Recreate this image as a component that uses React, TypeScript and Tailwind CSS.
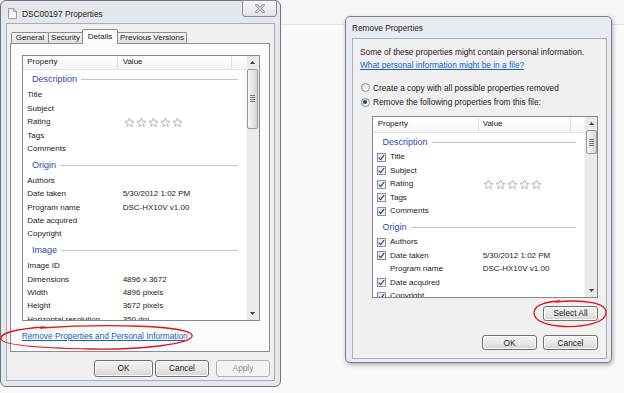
import React from "react";

const F = "font-['Liberation_Sans',Arial,sans-serif]";

function DocIcon() {
  return (
    <svg width="9" height="11" viewBox="0 0 9 11">
      <path d="M0.5 0.5 H5.5 L8.5 3.5 V10.5 H0.5 Z" fill="#fff" stroke="#9b9b9b" />
      <path d="M5.5 0.5 V3.5 H8.5" fill="none" stroke="#9b9b9b" />
    </svg>
  );
}

function CloseBtn() {
  return (
    <div className="mr-[3px] -mt-px w-[35px] h-[17px] rounded-b-[3px] border border-[#8a8e94] bg-gradient-to-b from-[#f7f8fa] to-[#dfe3e8] flex items-center justify-center">
      <svg width="10" height="9" viewBox="0 0 10 9">
        <path d="M1.5 1 L8.5 8 M8.5 1 L1.5 8" stroke="#8d9399" strokeWidth="2.6" strokeLinecap="square" />
        <path d="M1.5 1 L8.5 8 M8.5 1 L1.5 8" stroke="#f4f5f7" strokeWidth="1" strokeLinecap="square" />
      </svg>
    </div>
  );
}

function Tab({ children, w, active }: { children: React.ReactNode; w: string; active?: boolean }) {
  return (
    <div
      className={`${w} ${
        active
          ? "relative z-10 -mb-px h-[15.5px] bg-[#fcfcfc] border border-b-0 border-[#898c95]"
          : "h-[11.5px] bg-gradient-to-b from-[#f4f4f4] to-[#e1e1e1] border border-b-0 border-[#898c95]"
      } rounded-t-[2px] flex items-center justify-center text-[8px] leading-none`}
    >
      {children}
    </div>
  );
}

function Star() {
  return (
    <svg width="11" height="11" viewBox="0 0 24 24">
      <path
        d="M12 2.5l2.9 6.3 6.9.7-5.2 4.6 1.5 6.8L12 17.4l-6.1 3.5 1.5-6.8-5.2-4.6 6.9-.7z"
        fill="#fff"
        stroke="#adadad"
        strokeWidth="2"
        strokeLinejoin="round"
      />
    </svg>
  );
}

function Stars() {
  return (
    <div className="flex gap-[1px]">
      <Star />
      <Star />
      <Star />
      <Star />
      <Star />
    </div>
  );
}

function Scrollbar({ up, thumb }: { up: string; thumb: string }) {
  return (
    <div className="w-[13px] h-full shrink-0 bg-[#eaeaea] border-l border-[#f4f4f4] flex flex-col items-center">
      <div className={`${up} w-full flex items-center justify-center`}>
        <svg width="5" height="3" viewBox="0 0 5 3">
          <path d="M0 3 L2.5 0 L5 3 Z" fill="#404040" />
        </svg>
      </div>
      <div className={`${thumb} w-[11px] rounded-[2px] border border-[#999] bg-gradient-to-r from-[#f7f7f7] to-[#d6d6d6] flex flex-col items-center justify-center gap-[1px]`}>
        <div className="w-[5px] h-px bg-[#777]" />
        <div className="w-[5px] h-px bg-[#777]" />
        <div className="w-[5px] h-px bg-[#777]" />
        <div className="w-[5px] h-px bg-[#777]" />
      </div>
      <div className="flex-1" />
      <div className="h-[13px] w-full flex items-center justify-center">
        <svg width="5" height="3" viewBox="0 0 5 3">
          <path d="M0 0 L2.5 3 L5 0 Z" fill="#404040" />
        </svg>
      </div>
    </div>
  );
}

function Group({ label, h }: { label: string; h: string }) {
  return (
    <div className={`${h} flex items-center pl-[9.3px] pr-[8px] pt-[1px]`}>
      <span className="text-[9px] leading-none text-[#2d47b0]">{label}</span>
      <div className="flex-1 h-px bg-[#b7c6e8] ml-[4px]" />
    </div>
  );
}

function LRow({ label, value, stars }: { label: string; value?: string; stars?: boolean }) {
  return (
    <div className="h-[13.4px] shrink-0 flex items-center text-[8px] leading-none">
      <span className="w-[95.6px] pl-[4.6px]">{label}</span>
      {stars ? (
        <div className="pl-[5.5px]">
          <Stars />
        </div>
      ) : (
        <span className="pl-[4.4px]">{value}</span>
      )}
    </div>
  );
}

function Check() {
  return (
    <span className="w-[9px] h-[9px] shrink-0 border border-[#8e8f8f] bg-gradient-to-br from-[#e2e2e2] to-white flex items-center justify-center">
      <svg width="7" height="7" viewBox="0 0 8 8">
        <path d="M1 4.2 L3.1 6.4 L7 1.2" fill="none" stroke="#2a4aa0" strokeWidth="1.5" />
      </svg>
    </span>
  );
}

function RRow({ label, value, stars, box = true }: { label: string; value?: string; stars?: boolean; box?: boolean }) {
  return (
    <div className="h-[13.5px] shrink-0 flex items-center text-[8px] leading-none">
      <div className="w-[105.7px] flex items-center pl-[3.4px]">
        {box ? <Check /> : <span className="w-[9px] h-[9px] shrink-0" />}
        <span className="ml-[4.3px]">{label}</span>
      </div>
      {stars ? (
        <div className="pl-[4px]">
          <Stars />
        </div>
      ) : (
        <span className="pl-[3.7px]">{value}</span>
      )}
    </div>
  );
}

function Btn({ children, w, h, disabled }: { children: React.ReactNode; w: string; h: string; disabled?: boolean }) {
  return (
    <div
      className={`${w} ${h} rounded-[3px] border ${
        disabled
          ? "border-[#adb2b5] bg-[#f4f4f4] text-[#8f8f8f]"
          : "border-[#707070] bg-gradient-to-b from-[#f3f3f3] via-[#e9e9e9] to-[#d4d4d4] text-[#1b1b1b] shadow-[inset_0_0_0_1px_#fafafa]"
      } flex items-center justify-center text-[8.3px] leading-none`}
    >
      {children}
    </div>
  );
}

function LeftList() {
  return (
    <div className="w-[238px] h-[266.7px] border border-[#828790] bg-white flex">
      <div className="flex-1 flex flex-col overflow-hidden">
        <div className="h-[14.7px] shrink-0 flex text-[8px] leading-none bg-gradient-to-b from-white to-[#f4f5f7] border-b border-[#e5e5e5]">
          <div className="w-[95.6px] pl-[4.6px] flex items-center border-r border-[#e2e2e2]">Property</div>
          <div className="w-[114px] pl-[4.4px] flex items-center border-r border-[#e2e2e2]">Value</div>
          <div className="flex-1" />
        </div>
        <Group label="Description" h="h-[18.5px] shrink-0" />
        <LRow label="Title" />
        <LRow label="Subject" />
        <LRow label="Rating" stars />
        <LRow label="Tags" />
        <LRow label="Comments" />
        <Group label="Origin" h="h-[18.5px] shrink-0" />
        <LRow label="Authors" />
        <LRow label="Date taken" value="5/30/2012 1:02 PM" />
        <LRow label="Program name" value="DSC-HX10V v1.00" />
        <LRow label="Date acquired" />
        <LRow label="Copyright" />
        <Group label="Image" h="h-[18.5px] shrink-0" />
        <LRow label="Image ID" />
        <LRow label="Dimensions" value="4896 x 3672" />
        <LRow label="Width" value="4896 pixels" />
        <LRow label="Height" value="3672 pixels" />
        <LRow label="Horizontal resolution" value="350 dpi" />
      </div>
      <Scrollbar up="h-[13.3px]" thumb="h-[60px]" />
    </div>
  );
}

function RightList() {
  return (
    <div className="ml-[12.3px] w-[226px] h-[182.6px] shrink-0 border border-[#828790] bg-white flex">
      <div className="flex-1 flex flex-col overflow-hidden">
        <div className="h-[16.6px] shrink-0 flex text-[8px] leading-none bg-gradient-to-b from-white to-[#f4f5f7] border-b border-[#e5e5e5]">
          <div className="w-[105.7px] pl-[4.4px] flex items-center border-r border-[#e2e2e2]">Property</div>
          <div className="w-[91.7px] pl-[3.7px] flex items-center border-r border-[#e2e2e2]">Value</div>
          <div className="flex-1" />
        </div>
        <Group label="Description" h="h-[17.3px] shrink-0" />
        <RRow label="Title" />
        <RRow label="Subject" />
        <RRow label="Rating" stars />
        <RRow label="Tags" />
        <RRow label="Comments" />
        <Group label="Origin" h="h-[17.3px] shrink-0" />
        <RRow label="Authors" />
        <RRow label="Date taken" value="5/30/2012 1:02 PM" />
        <RRow label="Program name" value="DSC-HX10V v1.00" box={false} />
        <RRow label="Date acquired" />
        <RRow label="Copyright" />
      </div>
      <Scrollbar up="h-[13.3px]" thumb="h-[24.3px]" />
    </div>
  );
}

function Radio({ on }: { on?: boolean }) {
  return (
    <span className="w-[9px] h-[9px] shrink-0 rounded-full border border-[#8e8f8f] bg-gradient-to-br from-[#d8d8d8] to-white flex items-center justify-center">
      {on && <span className="w-[4px] h-[4px] rounded-full bg-[#24466f]" />}
    </span>
  );
}

function PropertiesDialog() {
  return (
    <div className="w-[281px] h-[387px] shrink-0 rounded-[6px] border border-[#70767d] bg-[#e4e8ec] flex flex-col">
      <div className="h-[22px] shrink-0 flex items-start justify-between">
        <div className="flex items-center gap-[5px] pl-[7px] pt-[7px]">
          <DocIcon />
          <span className="text-[8.3px] leading-[10px]">DSC00197 Properties</span>
        </div>
        <CloseBtn />
      </div>
      <div className="mx-[5px] mb-[5px] flex-1 border border-[#a7aeb6] bg-[#f0f0f0] flex flex-col">
        <div className="h-[19px] shrink-0 pl-[4px] flex items-end">
          <Tab w="w-[38px]">General</Tab>
          <Tab w="w-[35px] -ml-px">Security</Tab>
          <Tab w="w-[36px] -ml-px" active>
            Details
          </Tab>
          <Tab w="w-[70px] -ml-px">Previous Versions</Tab>
        </div>
        <div className="ml-[3px] mr-[4px] h-[309px] shrink-0 border border-[#898c95] bg-[#fcfcfc] pt-[10.5px] pl-[10.7px]">
          <LeftList />
          <div className="mt-[9.5px] text-[8.3px] leading-[10px] text-[#1560c8] underline">
            Remove Properties and Personal Information
          </div>
        </div>
        <div className="mt-[8px] mr-[4px] flex justify-end">
          <Btn w="w-[59px]" h="h-[17px]">OK</Btn>
          <Btn w="w-[54px] ml-[2px]" h="h-[17px]">Cancel</Btn>
          <Btn w="w-[54px] ml-[7px]" h="h-[17px]" disabled>
            Apply
          </Btn>
        </div>
      </div>
    </div>
  );
}

function RemoveDialog() {
  return (
    <div className="ml-[64px] mt-[16px] w-[267px] h-[347px] shrink-0 rounded-[5px] border border-[#7a7f86] bg-[#e9edf1] shadow-[1px_2px_4px_rgba(0,0,0,0.3)] flex flex-col">
      <div className="h-[21.3px] shrink-0 pl-[6px] pt-[1px] flex items-center text-[8.3px] leading-none">Remove Properties</div>
      <div className="ml-[5.7px] mr-[4.3px] mb-[3px] flex-1 border border-[#a9afb6] bg-[#f0f0f0] pl-[7.3px] pt-[7.5px] flex flex-col">
        <div className="text-[8.3px] leading-[11px]">Some of these properties might contain personal information.</div>
        <div className="mt-[2.7px] text-[8.3px] leading-[11px] text-[#1560c8] underline">
          What personal information might be in a file?
        </div>
        <div className="mt-[8.9px] h-[14.6px] pl-[1px] flex items-center gap-[3px] text-[8.3px] leading-none">
          <Radio />
          <span>Create a copy with all possible properties removed</span>
        </div>
        <div className="h-[14.6px] pl-[1px] flex items-center gap-[3px] text-[8.3px] leading-none">
          <Radio on />
          <span>Remove the following properties from this file:</span>
        </div>
        <div className="mt-[6.1px]">
          <RightList />
        </div>
        <div className="mt-[7.7px] pr-[7.7px] flex justify-end">
          <Btn w="w-[55px]" h="h-[15px]">Select All</Btn>
        </div>
        <div className="mt-[14.3px] pr-[7.7px] flex justify-end gap-[6px]">
          <Btn w="w-[55px]" h="h-[15px]">OK</Btn>
          <Btn w="w-[55px]" h="h-[15px]">Cancel</Btn>
        </div>
      </div>
    </div>
  );
}

function Annotations() {
  return (
    <svg className="absolute inset-0 pointer-events-none" width="624" height="393" viewBox="0 0 624 393">
      <path
        d="M40 328 C110 323, 188 326, 192 335 C195 344, 140 350, 90 349 C40 348, 2 345, 1 339 C0 333, 15 329, 45 327"
        fill="none"
        stroke="#e3141b"
        strokeWidth="1.3"
      />
      <path
        d="M555 302 C585 299, 607 303, 606 313 C605 323, 585 327, 565 326.5 C545 326, 534 320, 534 313 C534 306, 542 302, 560 301"
        fill="none"
        stroke="#e3141b"
        strokeWidth="1.3"
      />
    </svg>
  );
}

export default function App() {
  return (
    <div
      className={`${F} relative w-[624px] h-[393px] overflow-hidden text-[#1b1b1b] bg-[linear-gradient(to_bottom,#f5f6f8_0px,#f5f6f8_24px,#e1e7ef_24px,#e1e7ef_25px,#fafafa_25px)] flex items-start`}
    >
      <PropertiesDialog />
      <RemoveDialog />
      <Annotations />
    </div>
  );
}
